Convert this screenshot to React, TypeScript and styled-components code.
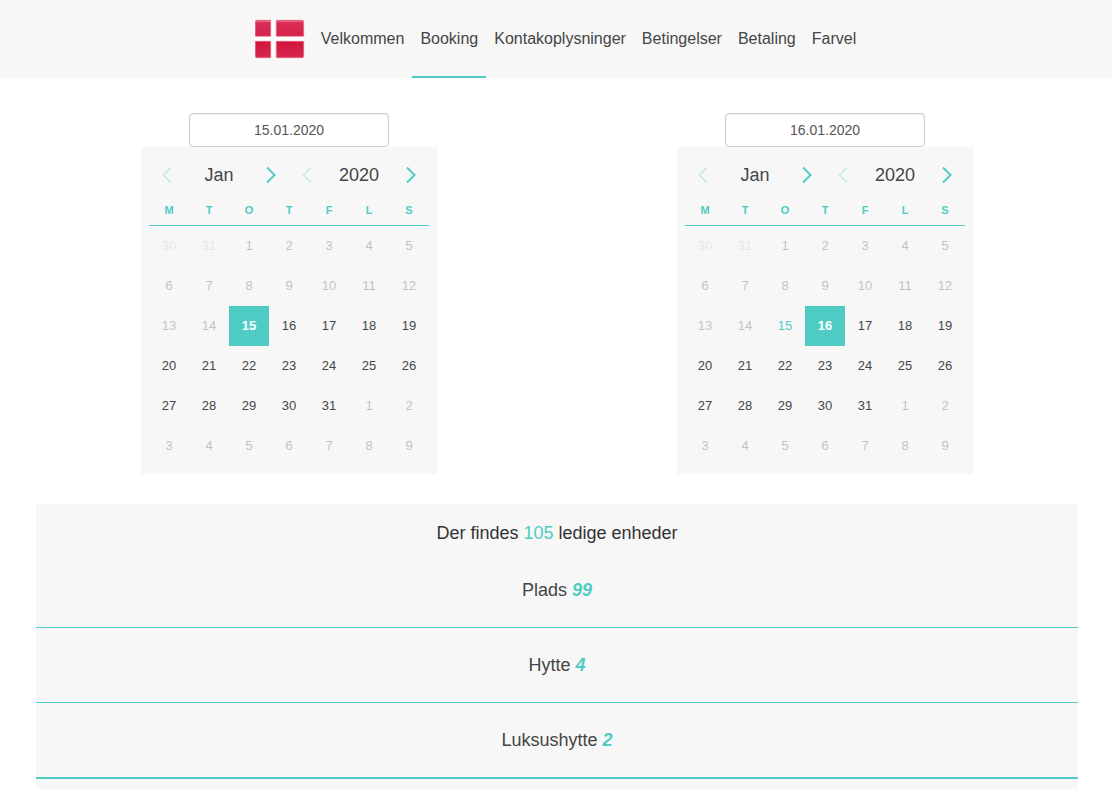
import React from "react";
import styled, { createGlobalStyle } from "styled-components";

const teal = "#4eccc4";
const surface = "#f7f7f7";
const ink = "#454545";

const GlobalStyle = createGlobalStyle`
  *, *::before, *::after { box-sizing: border-box; }
  body {
    margin: 0;
    background: #fff;
    color: #333;
    font-family: "Liberation Sans", Arial, Helvetica, sans-serif;
    font-size: 14px;
    line-height: 20px;
  }
  button, input { font: inherit; }
`;

const Header = styled.header`
  display: flex;
  justify-content: center;
  align-items: center;
  height: 78px;
  padding-left: 7px;
  background: ${surface};
`;

const FlagButton = styled.button`
  display: flex;
  padding: 0;
  margin-right: 8px;
  border: 0;
  background: none;
  cursor: pointer;
`;

const Nav = styled.nav`
  display: flex;
  height: 100%;
`;

const NavLink = styled.a<{ $active?: boolean }>`
  display: flex;
  align-items: center;
  padding: 2px 8px 0;
  border-bottom: 2px solid ${(p) => (p.$active ? teal : "transparent")};
  color: ${ink};
  font-size: 16px;
  text-decoration: none;
`;

const Page = styled.main`
  padding: 35px 19px 20px 21px;
`;

const Pickers = styled.div`
  display: grid;
  grid-template-columns: 1fr 1fr;
`;

const Picker = styled.section`
  display: flex;
  flex-direction: column;
  align-items: center;
`;

const DateInput = styled.input`
  width: 200px;
  height: 34px;
  padding: 6px 12px;
  border: 1px solid #ccc;
  border-radius: 4px;
  box-shadow: inset 0 1px 1px rgba(0, 0, 0, 0.075);
  color: #555;
  text-align: center;
`;

const Calendar = styled.div`
  width: 296px;
  padding: 8px;
  background: ${surface};
  color: ${ink};
`;

const CalendarHead = styled.div`
  display: grid;
  grid-template-columns: 1fr 1fr;
  height: 40px;
`;

const Stepper = styled.div`
  display: flex;
  align-items: center;
  justify-content: space-between;
  font-size: 18px;
`;

const StepButton = styled.button`
  display: flex;
  align-items: center;
  justify-content: center;
  width: 36px;
  height: 40px;
  padding: 0;
  border: 0;
  background: none;
  color: ${teal};
  cursor: pointer;

  &:disabled {
    opacity: 0.25;
    cursor: default;
  }
`;

const Days = styled.table`
  width: 100%;
  table-layout: fixed;
  border-collapse: separate;
  border-spacing: 0;
`;

const Weekday = styled.th`
  height: 31px;
  padding: 0;
  border-bottom: 1px solid ${teal};
  color: ${teal};
  font-size: 11px;
  font-weight: 700;
`;

const DayCell = styled.td`
  height: 40px;
  padding: 0;
`;

type Tone = "normal" | "muted" | "faint" | "today" | "selected";

const toneColor: Record<Tone, string> = {
  normal: ink,
  muted: "#c3c3c3",
  faint: "#e6e6e6",
  today: teal,
  selected: "#fff",
};

const DayButton = styled.button<{ $tone: Tone }>`
  display: block;
  width: 100%;
  height: 40px;
  padding: 0;
  border: 0;
  background: ${(p) => (p.$tone === "selected" ? teal : "transparent")};
  color: ${(p) => toneColor[p.$tone]};
  font-size: 13px;
  font-weight: ${(p) => (p.$tone === "selected" ? 700 : 400)};
  text-align: center;
`;

const Units = styled.section`
  margin: 30px 15px 0;
  padding: 19px 0 10px;
  border-radius: 2px;
  background: ${surface};
  font-size: 18px;
  text-align: center;
`;

const UnitsTitle = styled.h1`
  margin: 0 0 10px;
  font-size: 18px;
  font-weight: 400;
`;

const Total = styled.span`
  color: ${teal};
`;

const UnitList = styled.ul`
  margin: 0;
  padding: 0;
  list-style: none;
`;

const Unit = styled.li`
  border-bottom: 1px solid ${teal};

  &:last-child {
    border-bottom-width: 2px;
  }
`;

const UnitButton = styled.button`
  display: block;
  width: 100%;
  height: 74px;
  padding: 0;
  border: 0;
  background: none;
  color: ${ink};
  cursor: pointer;
`;

const Count = styled.em`
  color: ${teal};
  font-weight: 700;
`;

function Flag() {
  return (
    <svg width="50" height="40" viewBox="0 0 50 40" role="img" aria-label="Dansk">
      <defs>
        <linearGradient id="flagTop" x1="0" y1="0" x2="0" y2="1">
          <stop offset="0" stopColor="#db3058" />
          <stop offset="1" stopColor="#d6204a" />
        </linearGradient>
        <linearGradient id="flagBottom" x1="0" y1="0" x2="0" y2="1">
          <stop offset="0" stopColor="#d3133b" />
          <stop offset="1" stopColor="#d7284f" />
        </linearGradient>
      </defs>
      <rect x="0" y="1" width="49" height="38" rx="2" fill="#fff" />
      <g stroke="#e4607f" strokeWidth="0.6">
        <path d="M2 1.300H15.700V17.200H0.300V3Q0.300 1.300 2 1.300Z" fill="url(#flagTop)" />
        <path d="M21.300 1.300H47Q48.700 1.300 48.700 3V17.200H21.300Z" fill="url(#flagTop)" />
        <path d="M0.300 22.300H15.700V38.700H2Q0.300 38.700 0.300 37Z" fill="url(#flagBottom)" />
        <path d="M21.300 22.300H48.700V37Q48.700 38.700 47 38.700H21.300Z" fill="url(#flagBottom)" />
      </g>
      <path d="M1.500 3.500Q1.500 2.500 3 2.500H15M22 2.500H46Q47.500 2.500 47.500 3.500" fill="none" stroke="#e8718c" strokeWidth="0.8" />
    </svg>
  );
}

function Chevron({ next }: { next?: boolean }) {
  return (
    <svg width="10" height="18" viewBox="0 0 10 18" fill="none" stroke="currentColor" strokeWidth="1.9" aria-hidden="true">
      <path d={next ? "M1 1.500L8.600 9L1 16.500" : "M9 1.500L1.400 9L9 16.500"} />
    </svg>
  );
}

function StepperControl({ label, value }: { label: string; value: string }) {
  return (
    <Stepper>
      <StepButton disabled aria-label={`Forrige ${label}`}>
        <Chevron />
      </StepButton>
      <span>{value}</span>
      <StepButton aria-label={`Næste ${label}`}>
        <Chevron next />
      </StepButton>
    </Stepper>
  );
}

const weekdays = ["M", "T", "O", "T", "F", "L", "S"];
const today = 15;

function toneFor(offset: number, selected: number): Tone {
  if (offset < 1) return "faint";
  if (offset > 31) return "muted";
  if (offset === selected) return "selected";
  if (offset === today) return "today";
  return offset < today ? "muted" : "normal";
}

function dayLabel(offset: number) {
  if (offset < 1) return offset + 31;
  return offset > 31 ? offset - 31 : offset;
}

function DatePicker({ label, selected }: { label: string; selected: number }) {
  return (
    <Picker>
      <DateInput aria-label={label} defaultValue={`${selected}.01.2020`} />
      <Calendar>
        <CalendarHead>
          <StepperControl label="måned" value="Jan" />
          <StepperControl label="år" value="2020" />
        </CalendarHead>
        <Days>
          <thead>
            <tr>
              {weekdays.map((d, i) => (
                <Weekday key={i} scope="col">{d}</Weekday>
              ))}
            </tr>
          </thead>
          <tbody>
            {[0, 1, 2, 3, 4, 5].map((week) => (
              <tr key={week}>
                {weekdays.map((_, i) => {
                  const offset = week * 7 + i - 1;
                  const tone = toneFor(offset, selected);
                  return (
                    <DayCell key={i}>
                      <DayButton $tone={tone} disabled={tone === "muted" || tone === "faint"}>
                        {dayLabel(offset)}
                      </DayButton>
                    </DayCell>
                  );
                })}
              </tr>
            ))}
          </tbody>
        </Days>
      </Calendar>
    </Picker>
  );
}

const steps = ["Velkommen", "Booking", "Kontakoplysninger", "Betingelser", "Betaling", "Farvel"];
const units = [
  { name: "Plads", count: 99 },
  { name: "Hytte", count: 4 },
  { name: "Luksushytte", count: 2 },
];

export default function App() {
  return (
    <>
      <GlobalStyle />
      <Header>
        <FlagButton aria-label="Vælg sprog">
          <Flag />
        </FlagButton>
        <Nav>
          {steps.map((step) => (
            <NavLink key={step} href="#" $active={step === "Booking"}>{step}</NavLink>
          ))}
        </Nav>
      </Header>
      <Page>
        <Pickers>
          <DatePicker label="Ankomst" selected={15} />
          <DatePicker label="Afrejse" selected={16} />
        </Pickers>
        <Units>
          <UnitsTitle>
            Der findes <Total>105</Total> ledige enheder
          </UnitsTitle>
          <UnitList>
            {units.map((u) => (
              <Unit key={u.name}>
                <UnitButton>
                  {u.name} <Count>{u.count}</Count>
                </UnitButton>
              </Unit>
            ))}
          </UnitList>
        </Units>
      </Page>
    </>
  );
}
